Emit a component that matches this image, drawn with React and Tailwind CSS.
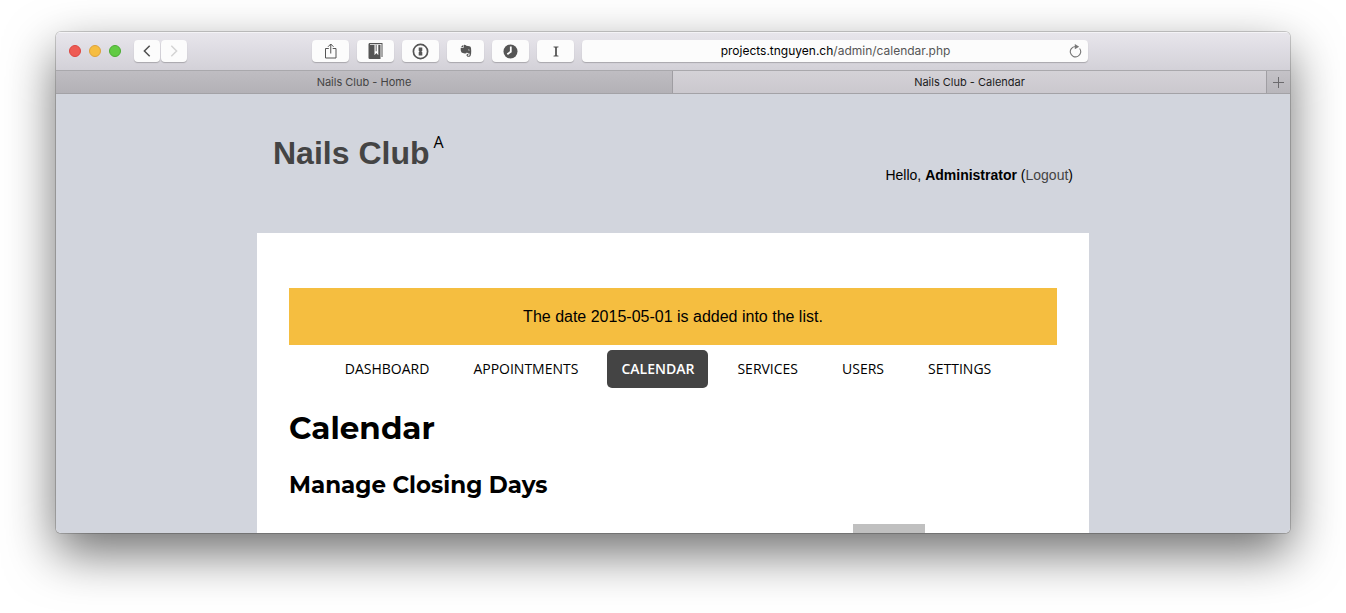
const UI = "font-['Inter',sans-serif]";

function ToolButton({ label, children }) {
  return (
    <button
      aria-label={label}
      className="flex h-[22px] w-[37px] items-center justify-center rounded-[4px] bg-[#fcfcfc] text-[#555] shadow-[0_1px_1px_rgba(0,0,0,0.22)]"
    >
      {children}
    </button>
  );
}

function Light({ label, tone }) {
  return <button aria-label={label} className={"size-3 rounded-full border " + tone} />;
}

function Toolbar() {
  return (
    <div className="flex h-[39px] items-center border-b border-[#a9a8ac] bg-gradient-to-b from-[#e8e6ec] to-[#d3d1d8] pl-[13px] shadow-[inset_0_1px_0_#f4f3f6]">
      <div className="flex gap-2">
        <Light label="Close" tone="bg-[#ee5b54] border-[#dd4540]" />
        <Light label="Minimize" tone="bg-[#f6bd41] border-[#dea23a]" />
        <Light label="Zoom" tone="bg-[#62cb44] border-[#4bac33]" />
      </div>
      <div className="ml-[13px] flex gap-px">
        <button aria-label="Back" className="flex h-[22px] w-[26px] items-center justify-center rounded-[4px] bg-[#fcfcfc] shadow-[0_1px_1px_rgba(0,0,0,0.22)]">
          <svg width="8" height="12" viewBox="0 0 8 12" fill="none" stroke="#505050" strokeWidth="1.5"><path d="M6.7.7 1.4 6l5.3 5.3" /></svg>
        </button>
        <button aria-label="Forward" className="flex h-[22px] w-[26px] items-center justify-center rounded-[4px] bg-[#fcfcfc] shadow-[0_1px_1px_rgba(0,0,0,0.22)]">
          <svg width="8" height="12" viewBox="0 0 8 12" fill="none" stroke="#d4d4d4" strokeWidth="1.5"><path d="M1.3.7 6.6 6l-5.3 5.3" /></svg>
        </button>
      </div>
      <div className="mr-[202px] ml-[125px] flex flex-1 gap-2">
        <ToolButton label="Share">
          <svg width="12" height="16" viewBox="0 0 12 16" fill="none" stroke="currentColor" strokeWidth="1"><path d="M3.8 5.5H.5v9.500h10.500V5.500H7.700M5.750 10.500V1M3 3.800 5.750 1 8.500 3.800" /></svg>
        </ToolButton>
        <ToolButton label="Bookmark">
          <svg width="15" height="16" viewBox="0 0 15 16"><path fill="currentColor" d="M1.500 0H14.500v14h-1V1H2v.8h10.500V16H1.800Q.5 16 .5 14.700V1.500Q.5 0 1.500 0z" /><path fill="#fff" d="M6.500 1.800h3.800v10.400L8.400 10l-1.900 2.200z" /><path fill="currentColor" d="M7.600 1.800h1.200v6.400H7.600z" opacity=".75" /></svg>
        </ToolButton>
        <ToolButton label="1Password">
          <svg width="17" height="17" viewBox="0 0 17 17"><circle cx="8.500" cy="8.500" r="7.100" fill="none" stroke="currentColor" strokeWidth="1.700" /><path fill="currentColor" d="M6.700 4.600h3.600v3.100l-.9.800.9.800v3.100H6.700V9.300l.9-.8-.9-.8z" /></svg>
        </ToolButton>
        <ToolButton label="Evernote">
          <svg width="12" height="14" viewBox="0 0 12 14"><path fill="currentColor" d="M3.6.9Q5.2.5 6.4 1.7l3 .5q1.4.2 1.6 1.8.4 3 .1 5.7-.3 2.7-1.6 3-2.6.6-3-1.2-.3-1.7 1.9-1.8v1.1q-.9 0-.7.6.3.6 1.4.3.6-.5.5-2.3-1.6.2-2.7-1-.5 1.2-2 1-2.4-.1-3.300-.9Q.6 7.500.6 4.600.6 4 1.200 4h2q.4 0 .4-.4z" /><path fill="currentColor" d="M3 1.100v2.200H.700z" /><path fill="#fcfcfc" d="M8.300 5.600q1.200-.3 1.400 1-.6-.4-1.400-.2z" /></svg>
        </ToolButton>
        <ToolButton label="History">
          <svg width="15" height="15" viewBox="0 0 15 15"><circle cx="7.500" cy="7.500" r="7" fill="currentColor" /><path fill="none" stroke="#fff" strokeWidth="1.800" d="M7.800 2.500v5.200L4.300 10.200" /></svg>
        </ToolButton>
        <ToolButton label="Instapaper">
          <svg width="6" height="11" viewBox="0 0 6 11"><path fill="currentColor" d="M.5.500h5v.8l-1.600.4v7.600l1.600.4v.8h-5v-.8l1.600-.4V1.700L.5 1.300z" /></svg>
        </ToolButton>
        <div className="flex h-[22px] flex-1 items-center rounded-[4px] bg-[#fcfcfc] pr-1.5 pl-5 shadow-[0_1px_1px_rgba(0,0,0,0.22)]">
          <button aria-label="Edit address" className="flex-1 text-[12px] leading-[22px] text-[#555]">
            <span className="text-black">projects.tnguyen.ch</span>/admin/calendar.php
          </button>
          <button aria-label="Reload" className="text-[#777]">
            <svg width="13" height="14" viewBox="0 0 13 14"><path fill="none" stroke="currentColor" strokeWidth="1.100" d="M10.600 4.500A5.200 5.200 0 1 1 6.300 2.500" /><path fill="currentColor" d="M5.800 0 10.200 2.700 5.800 5.200z" /></svg>
          </button>
        </div>
      </div>
    </div>
  );
}

function TabBar() {
  return (
    <nav aria-label="Tabs" className="flex h-[23px] border-b border-[#a3a2a6] text-[11px] leading-[23px]">
      <button className="w-1/2 border-r border-[#9f9da2] bg-gradient-to-b from-[#bfbdc2] to-[#b3b1b6] text-[#444]">Nails Club - Home</button>
      <button className="flex-1 bg-gradient-to-b from-[#d4d2d7] to-[#cbc8ce] text-[#1c1c1c]">Nails Club - Calendar</button>
      <button aria-label="New tab" className="flex w-6 items-center justify-center border-l border-[#a09ea3] bg-gradient-to-b from-[#c4c2c7] to-[#b8b6bb]">
        <svg width="11" height="11" viewBox="0 0 11 11" stroke="#6b6a6d"><path d="M5.500 0v11M0 5.500h11" /></svg>
      </button>
    </nav>
  );
}

const links = ["Dashboard", "Appointments", "Calendar", "Services", "Users", "Settings"];

function SitePage() {
  return (
    <div className="min-h-0 flex-1 overflow-hidden bg-[#d2d5dd] font-['Liberation_Sans',sans-serif] text-black">
      <div className="mx-auto max-w-[832px]">
        <header className="flex h-[139px] justify-between px-4 pt-9">
          <div className="flex items-start gap-1">
            <a href="#home" className="pt-1 text-[32px] leading-[38px] font-bold text-[#444]">Nails Club</a>
            <span className="pt-0.5 font-['Open_Sans',sans-serif] text-[16px] leading-5">A</span>
          </div>
          <p className="pt-[35px] text-[14px] leading-5">
            Hello, <strong>Administrator</strong> (<a href="#logout" className="text-[#444]">Logout</a>)
          </p>
        </header>
        <main className="bg-white px-8 pt-[55px] pb-8">
          <p role="status" className="bg-[#f5be40] py-4 text-center text-[16px] leading-[25px]">
            The date 2015-05-01 is added into the list.
          </p>
          <nav aria-label="Main" className="mt-[5px] pr-2.5 font-['Open_Sans',sans-serif] text-[14px] leading-[38px] uppercase">
            <ul className="flex justify-center gap-3.5">
              {links.map((name) => (
                <li key={name}>
                  <a
                    href={"#" + name.toLowerCase()}
                    className={name === "Calendar" ? "block rounded-[5px] bg-[#444] px-3.5 font-semibold text-white" : "block px-[15px]"}
                  >
                    {name}
                  </a>
                </li>
              ))}
            </ul>
          </nav>
          <div className="font-['Montserrat','Inter',sans-serif] font-bold">
            <h1 className="mt-5 text-[31px] leading-10">Calendar</h1>
            <h2 className="mt-[21px] text-[23px] leading-8">Manage Closing Days</h2>
          </div>
          <div className="mt-[23px] flex justify-end pr-[132px]">
            <div className="h-12 w-[72px] bg-[#c0c0c0]" />
          </div>
        </main>
      </div>
    </div>
  );
}

export default function App() {
  return (
    <div className="flex h-screen flex-col bg-white px-14 pt-8 pb-20">
      <div className="flex min-h-0 flex-1 rounded-[5px] shadow-[0_0_0_1px_rgba(0,0,0,0.18),0_20px_50px_rgba(0,0,0,0.57)]">
        <div className={"flex min-w-0 flex-1 flex-col overflow-hidden rounded-[5px] " + UI}>
          <Toolbar />
          <TabBar />
          <SitePage />
        </div>
      </div>
    </div>
  );
}
